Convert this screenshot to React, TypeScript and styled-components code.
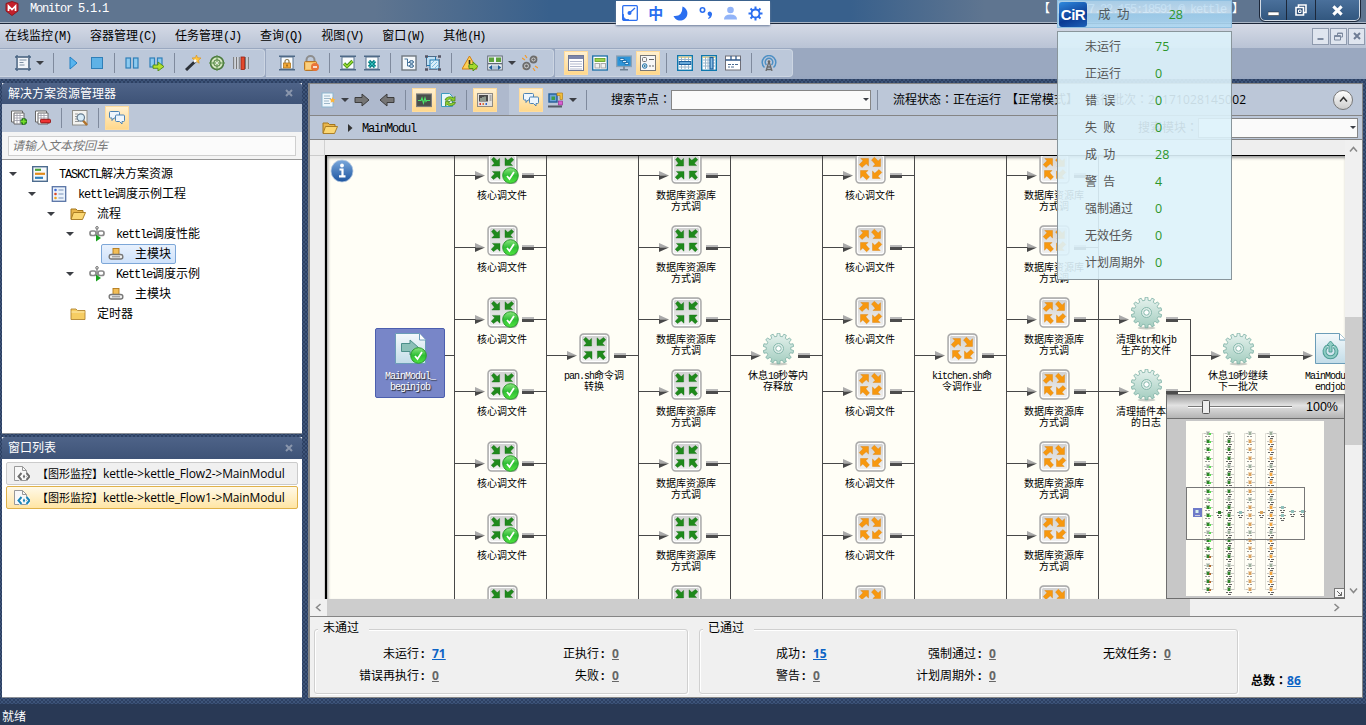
import React from "react";
import styled, { createGlobalStyle, css } from "styled-components";

const SONG = `"Liberation Mono","Noto Sans CJK SC",monospace`;
const YAHEI = `"Open Sans","Noto Sans CJK SC",sans-serif`;

const Global = createGlobalStyle`
  *{box-sizing:border-box}
  html,body{margin:0;padding:0;overflow:hidden}
  body{font:12px/14px ${SONG};color:#000}
  svg{display:block;flex:none}
`;

/* ---------- text ---------- */
const Half = styled.span<{ $tight: number }>`
  letter-spacing:-${p => p.$tight}px;
  white-space:pre;
`;
const T = ({ children, tight = 1.2 }: { children: string; tight?: number }) => (
  <>{children.split(/([\x20-\x7e]+)/).filter(Boolean).map((s, i) =>
    /^[\x20-\x7e]/.test(s) ? <Half key={i} $tight={tight}>{s}</Half> : <React.Fragment key={i}>{s}</React.Fragment>)}</>
);
/* full-width colon centred in its cell */
const Colon = styled.span`font-family:"Noto Sans CJK JP",sans-serif;line-height:1`;

/* ---------- icons ---------- */
const B = "#1a6fa8";
const doc = (stroke = "#7d8794") => <rect x="1" y="1" width="14" height="14" fill="#f4f8fb" stroke={stroke} strokeWidth="1.4" />;
const scroll = (
  <>
    <rect x="2" y="2" width="12" height="12" fill="#fafcfd" stroke="#5b7591" />
    <path d="M0 1.2h16M0 14.8h16" stroke="#4f6a88" strokeWidth="1.6" />
  </>
);
const plusArrow = <path d="M7 9.5h4V7l5 4.5-5 4.5v-2.5H7z" fill="#a7d92c" stroke="#4d8a13" strokeWidth=".9" />;
const gear = (n: number, R: number, r: number, c: number) => {
  const pts: string[] = [];
  for (let i = 0; i < n; i++) {
    const s = (Math.PI * 2) / n;
    [[-0.3, r], [-0.2, R], [0.2, R], [0.3, r]].forEach(([o, rad]) => {
      const a = (i + o) * s;
      pts.push(`${(c + Math.sin(a) * rad).toFixed(2)},${(c - Math.cos(a) * rad).toFixed(2)}`);
    });
  }
  return pts.join(" ");
};

const ICONS: Record<string, React.ReactNode> = {
  frame: <><path d="M0 2h16M0 14h16M2 0v16M14 0v16" stroke="#43607f" strokeWidth="1.3" /><rect x="2.5" y="2.5" width="11" height="11" fill="#f1f5f9" stroke="#6d8097" /><path d="M4.5 5h7M4.5 7.5h4M4.5 10h5" stroke="#7d8fa3" /></>,
  play: <path d="M5 2l7 6-7 6z" fill="#58b4ee" stroke="#2180c4" />,
  stop: <rect x="2.5" y="2.5" width="11" height="11" fill="#5fb2e6" stroke="#2f7fb8" />,
  pause: <g fill="#8ccaf0" stroke="#2f7fb8" strokeWidth="1.2"><rect x="2" y="3" width="4.5" height="10" /><rect x="9.5" y="3" width="4.5" height="10" /></g>,
  pausego: <><g fill="#8ccaf0" stroke="#2f7fb8" strokeWidth="1.2"><rect x="2" y="3" width="4.5" height="9" /><rect x="9.5" y="3" width="4.5" height="9" /></g><path d="M5 10h5V7l6 4.6-6 4.4v-2.700H5z" fill="#b4e02f" stroke="#4d8a13" strokeWidth=".9" /></>,
  wand: <><path d="M11.500 0l1 2.700L16 3l-2.500 2.200.7 3-2.700-1.600-2.500 1.600.6-3L7 3l3.300-.3z" fill="#ffc53d" stroke="#d98e14" strokeWidth=".6" /><path d="M1 15l9.500-9" stroke="#2c3138" strokeWidth="3" /><path d="M9 7l2-2" stroke="#fff" strokeWidth="2.500" /></>,
  target: <><circle cx="8" cy="8" r="6.500" fill="#d5e8c0" stroke="#4a7a3c" strokeWidth="1.600" /><circle cx="8" cy="8" r="3.300" fill="none" stroke="#4a7a3c" /><path d="M8 0v16M0 8h16" stroke="#5f9150" strokeWidth="1" /><circle cx="8" cy="8" r="1" fill="#fff" /></>,
  bars: <><path d="M.8 2v12M3.500 2v12M6 2v12M12.700 2v12M15.200 2v12" stroke="#777" strokeWidth="1.300" /><path d="M2 2v12M5 2v12M14 2v12" stroke="#eee" /><rect x="8" y="2" width="3.500" height="12.500" fill="#e2482b" stroke="#9d1f10" strokeWidth=".8" /></>,
  lockdoc: <>{scroll}<path d="M6 8V6.500a2 2 0 014 0V8" fill="none" stroke="#8b7a52" strokeWidth="1.200" /><rect x="4.500" y="8" width="7" height="5" fill="#f2a93a" stroke="#a96b10" strokeWidth=".7" /><path d="M8 9.500v2" stroke="#5b3a05" /></>,
  lock: <><path d="M3.500 7V5a4 4 0 018 0v2" fill="none" stroke="#8d8d8d" strokeWidth="2" /><rect x="1.500" y="6.500" width="12" height="9" rx="1" fill="#f5bd5c" stroke="#b5762a" /><path d="M3 9h9M3 11h7M3 13h5" stroke="#fbe0a8" /><circle cx="12" cy="12" r="4" fill="#e8743a" /><path d="M10 12h4" stroke="#fff" strokeWidth="1.500" /></>,
  okdoc: <>{scroll}<path d="M4 8.500l3 3L12.500 6" fill="none" stroke="#3f8f18" strokeWidth="3.200" /><path d="M4 8.500l3 3L12.500 6" fill="none" stroke="#9ad832" strokeWidth="1.600" /></>,
  xdoc: <>{scroll}<path d="M5 6l6 6M11 6l-6 6" stroke="#0c7f86" strokeWidth="3.200" /><path d="M5 6l6 6M11 6l-6 6" stroke="#2fc0bb" strokeWidth="1" /></>,
  treedoc: <>{doc("#707880")}<path d="M3.500 4h3v7H9M6.500 7.500H9" fill="none" stroke="#47749b" /><ellipse cx="10.500" cy="7" rx="2" ry="1.400" fill="#bcd8ec" stroke="#37648d" /><ellipse cx="10.500" cy="11" rx="2" ry="1.400" fill="#bcd8ec" stroke="#37648d" /></>,
  crop: <><rect x="1.500" y="1.500" width="9" height="9" fill="#bfe0f4" stroke="#1f76ad" /><rect x="5" y="5" width="9" height="9" fill="#d9eef9" stroke="#1f76ad" /><path d="M6 9l3-3M7 12l5-5M10 13l3-3" stroke="#7dbbe0" /><path d="M0 1.500h3M13 1.500h3M0 14.500h3M13 14.500h3" stroke="#556" strokeWidth="2.600" /><path d="M4 1.500h8M1.500 4v8M14.500 4v8M4 14.500h8" stroke="#667" strokeWidth=".7" /></>,
  warn: <><path d="M7.500 1L15 14H0z" fill="#fbcf57" stroke="#d27d12" /><path d="M7.500 5v4M7.500 10.500v1.500" stroke="#2d2a20" strokeWidth="1.600" />{plusArrow}</>,
  grid: <><rect x=".7" y="1" width="14.600" height="14" fill="#eef2f6" stroke="#616b78" /><rect x="2" y="2.500" width="5" height="4.500" fill="#5da23b" /><rect x="9" y="2.500" width="5" height="4.500" fill="#5da23b" /><rect x="1" y="8" width="14" height="1.300" fill="#616b78" /><path d="M2 12.500l3-2v4zM14 12.500l-3-2v4zM7 10.500v4M9 10.500v4" fill="#1f5d95" stroke="#1f5d95" strokeWidth=".6" /></>,
  bug: <><path d="M0 3l3 2M3 0l2 3M16 13l-3-2M13 16l-2-3M1 14l3-3M15 2l-4 4" stroke="#f39a2c" strokeWidth="1.200" /><circle cx="11.500" cy="4.500" r="3" fill="#ddd" stroke="#6c6c6c" strokeWidth="1.800" /><circle cx="4.500" cy="11" r="3.300" fill="#ccc" stroke="#6c6c6c" strokeWidth="1.800" /><circle cx="11.500" cy="4.500" r="1.200" fill="#666" /><circle cx="4.500" cy="11" r="1.400" fill="#666" /></>,
  list: <><rect x=".5" y=".5" width="15" height="15" fill="#fff" stroke="#6f7896" /><rect x="1" y="1" width="14" height="3" fill="#7c86ab" /><path d="M2 6.500h12M2 9h12M2 11.500h12M2 14h12" stroke="#b3bace" /></>,
  table: <><rect x=".7" y="1" width="14.600" height="14" fill="#fff" stroke={B} strokeWidth="1.300" /><rect x="3" y="3.500" width="10" height="3" fill="#9ed24b" stroke="#5d9b24" strokeWidth=".8" /><rect x="3" y="8.500" width="4.500" height="4.500" fill="#f2f2f2" stroke="#aaa" /><rect x="9" y="8.500" width="4.500" height="4.500" fill="#f2f2f2" stroke="#aaa" /></>,
  monitor: <><rect x=".7" y="1" width="14.600" height="10.500" fill="#2d94d8" stroke="#8aa0b5" strokeWidth="1.300" /><path d="M8 11.500V14M4 14.700h8" stroke="#6f8193" strokeWidth="1.600" /><path d="M4 3.500h4v2H4zM6.500 5.500h4v2h-4zM9 7.500h3.500v2H9z" fill="#dff2fd" stroke="#0a5c9c" strokeWidth=".7" /></>,
  props: <><rect x=".5" y=".5" width="15" height="15" fill="#f7f7f7" stroke="#777" /><rect x="2.500" y="2.500" width="4" height="4" rx="1" fill="none" stroke="#777" /><circle cx="4.700" cy="11" r="2.300" fill="#bfe2f6" stroke="#2a74a8" /><circle cx="4.700" cy="11" r=".8" fill="#145" /><path d="M9 4.500h5M9 11h2M12 11h2" stroke="#666" strokeWidth="1.200" /></>,
  rowtab: <><rect x=".7" y=".7" width="14.600" height="14.600" fill="#fff" stroke="#0f78ae" strokeWidth="1.400" /><path d="M1.500 2.200h13" stroke="#e8c34e" /><path d="M4.500 2v12M8 2v12M11.500 2v12M2 4.500h12M2 12h12" stroke="#9ab6cc" /><rect x="2.200" y="6.500" width="11.600" height="3" fill="#69a9d9" stroke="#195f9e" /></>,
  coltab: <><rect x=".7" y=".7" width="14.600" height="14.600" fill="#fff" stroke="#0f78ae" strokeWidth="1.400" /><path d="M1.500 2.200h13" stroke="#e8c34e" /><path d="M4.500 2v12M7 2v12M2 5h12M2 8h12M2 11h12" stroke="#9ab6cc" /><rect x="9" y="2.500" width="3" height="11.500" fill="#8abde3" stroke="#195f9e" strokeWidth="1.200" /></>,
  tabs: <><rect x=".5" y="1" width="15" height="14" fill="#fff" stroke="#6f6f77" /><path d="M.5 5h15M6 1v4M11 1v4" stroke="#31598a" strokeWidth="1.300" /><path d="M3 9.500h3M7 9.500h2M10 9.500h3M3 12h2M6 12h3" stroke="#4b6b91" /></>,
  antenna: <><path d="M3.500 12.500a6.800 6.800 0 119 0M5.500 10a3.800 3.800 0 115 0" fill="none" stroke="#4c8fc4" strokeWidth="1.500" /><path d="M8 6.500L5 16M8 6.500L11 16M6 12h4M5.500 14.500h5" stroke="#6a6a6a" strokeWidth="1.300" /><circle cx="8" cy="6.500" r="1.300" fill="#666" /></>,
  docstar: <><rect x="2" y="1" width="11" height="14" fill="#eef6fb" stroke="#8cb6d0" /><path d="M4 4h6M4 6.500h7M4 9h5M4 11.500h6" stroke="#9cb6c8" /><path d="M12.500 5l.9 2 2.200.2-1.600 1.500.4 2.100-1.900-1.100-1.900 1.100.4-2.100L9.400 7.200l2.200-.2z" fill="#fbb53e" /></>,
  right: <path d="M1 5.500h7V2l7 6-7 6v-3.500H1z" fill="#757575" stroke="#3d3d3d" />,
  left: <path d="M15 5.500H8V2L1 8l7 6v-3.500h7z" fill="#757575" stroke="#3d3d3d" />,
  pulse: <><rect x=".5" y="2" width="15" height="12.500" fill="#4b4f4c" stroke="#7c7c7c" strokeWidth="1.200" /><path d="M2 8.500h3l1-2.500 1.500 5L9 6l1 3.500.8-1H14" fill="none" stroke="#49e467" strokeWidth="1.100" /></>,
  refresh: <><path d="M1.500 1.500h8l3 3v10h-11z" fill="#e7f6fb" stroke="#3c9cc0" /><path d="M5 8a5 4 0 018.500-2l1.500-1.500V9h-4.500L12 7.500A3.500 3 0 007.500 8.500zM15.500 10.500a5 4 0 01-8.500 2L5.500 14v-4.500H10L8.500 11a3.500 3 0 004.500-.5z" fill="#8fd02c" stroke="#3f7d12" strokeWidth=".7" /></>,
  meter: <><rect x=".5" y="1.500" width="15" height="13" fill="#e4e2de" stroke="#8f8b84" /><rect x="2" y="3" width="9" height="6.500" fill="#4a4a4a" /><path d="M4 9V6M6 9V5M8 9V4.500" stroke="#cfe6cf" /><path d="M12.500 4h2M12.500 6h2M12.500 8h2" stroke="#777" /><path d="M2.500 12h1.500" stroke="#d33" strokeWidth="2" /><path d="M5.500 12h1.500" stroke="#d73" strokeWidth="2" /><path d="M8.500 12H10" stroke="#36c" strokeWidth="2" /></>,
  chat: <g stroke="#4d83b5" strokeWidth="1" fill="#eef6fd"><path d="M1.500 1.500h8q1 0 1 1v4.500q0 1-1 1H5L3 10.500V8H1.500q-1 0-1-1V2.500q0-1 1-1z" /><path d="M7.500 5h7q1 0 1 1v4.500q0 1-1 1H13V14l-2.500-2.500h-3q-1 0-1-1V6q0-1 1-1z" /></g>,
  blocks: <><rect x="1" y="2" width="8" height="8" fill="#6aa3d8" stroke="#245c97" strokeWidth="1.400" /><rect x="3.500" y="4.500" width="3.500" height="3.500" fill="#3f9b47" /><path d="M9 1h5.500v6.500H12v-4H9z" fill="#f0bd3c" stroke="#b5811a" strokeWidth=".7" /><rect x="10.500" y="9" width="4" height="4" fill="#d860d0" stroke="#97308f" strokeWidth=".7" /><path d="M0 14.500h14" stroke="#555b66" strokeWidth="2" /></>,
  expand: <><path d="M.5 1h11v11H.5z" fill="#fff" stroke="#666" /><path d="M3 3h10v11H3z" fill="#fff" stroke="#666" /><path d="M3 5.500h10M3 8h10M3 10.500h10M6 3v11M9 3v11" stroke="#9a9aa6" strokeWidth=".8" /><path d="M9.500 11.500h6.500M12.700 8.300v6.500" stroke="#125c12" strokeWidth="3.800" /><path d="M10 11.500h5.500M12.700 8.800v5.500" stroke="#73dd2a" strokeWidth="1.800" /></>,
  collapse: <><path d="M.5 1h11v11H.5z" fill="#fff" stroke="#666" /><path d="M3 3h10v11H3z" fill="#fff" stroke="#666" /><path d="M3 5.500h10M3 8h10M6 3v8M9 3v8" stroke="#9a9aa6" strokeWidth=".8" /><rect x="5.500" y="9.300" width="10" height="3.600" rx="1" fill="#e33" stroke="#8c1010" strokeWidth=".9" /></>,
  find: <><rect x=".5" y=".5" width="14.500" height="14.500" fill="#f3f3f0" stroke="#8d8d88" /><path d="M3 4h3M3 6.500h2M3 9h2M3 11.500h4" stroke="#999" /><path d="M11 10.500l4 4.500" stroke="#b0722b" strokeWidth="2.500" /><circle cx="8.800" cy="7.500" r="3.700" fill="#d8ecf8" stroke="#667c8e" strokeWidth="1.200" /></>,
  folderOpen: <><path d="M1 13V3h5l1.500 1.500H13V7" fill="#e9b64c" stroke="#a4761c" /><path d="M3.500 6.500h12L12.500 13.500H1z" fill="#fbd773" stroke="#a4761c" strokeWidth=".9" /></>,
  folder: <><path d="M1 13.500V3h5l1.500 1.500H15v9z" fill="#f6cd63" stroke="#b28632" strokeWidth=".9" /><path d="M1.500 6h13" stroke="#fdeab0" /></>,
  solution: <><rect x=".7" y=".7" width="14.600" height="14.600" fill="#f5f9fc" stroke="#4d6c8f" strokeWidth="1.400" /><path d="M3 3.800h6" stroke="#4ba23b" strokeWidth="2.200" /><path d="M3 7.800h10" stroke="#e28b1c" strokeWidth="2.200" /><path d="M3 11.800h8" stroke="#2f7fbd" strokeWidth="2.200" /></>,
  project: <><rect x="1.300" y=".7" width="13.400" height="14.600" fill="#eaf2fb" stroke="#5873a5" strokeWidth="1.300" /><circle cx="4.500" cy="4" r="1.300" fill="#446bd4" /><circle cx="4.500" cy="8" r="1.300" fill="#dd4a2a" /><circle cx="4.500" cy="12" r="1.300" fill="#efa51e" /><path d="M7.500 4h5M7.500 8h5M7.500 12h5" stroke="#7b92b8" /></>,
  flow: <><path d="M8 1v12" stroke="#888" strokeWidth="1.300" /><circle cx="8" cy="1.800" r="1.300" fill="#ddd" stroke="#777" /><rect x="1" y="5" width="6" height="4.500" rx="2" fill="none" stroke="#8a8a8a" strokeWidth="1.700" /><rect x="9" y="5" width="6" height="4.500" rx="2" fill="none" stroke="#8a8a8a" strokeWidth="1.700" /><path d="M7 8.500l5 3.500-5 3.500z" fill="#19a11d" /></>,
  module: <><rect x="5" y="2.500" width="6" height="6" fill="#f2be57" stroke="#b37a1c" strokeWidth=".9" /><rect x="1.200" y="8.500" width="13.600" height="4.500" rx="2" fill="#eee" stroke="#777" strokeWidth="1.400" /><path d="M4 10.800h8" stroke="#888" /></>,
};
const codeDoc = (c: string) => (
  <><path d="M.5.500h8l4 4v10H.5z" fill="#f8f8f8" stroke="#999" /><path d="M8.500.5v4h4" fill="none" stroke="#999" /><path d="M7.500 7l-3 3.500 3 3.500M12.500 7l3 3.500-3 3.500" fill="none" stroke="#fff" strokeWidth="4" /><path d="M7.500 7l-3 3.500 3 3.500M12.500 7l3 3.500-3 3.500" fill="none" stroke={c} strokeWidth="2" /><path d="M10 8.300l1.200 2.200L10 12.700l-1.200-2.200z" fill={c} /></>
);
ICONS.codeGray = codeDoc("#6e6e6e");
ICONS.codeBlue = codeDoc("#1d86b8");

const Icon = ({ n, s = 16 }: { n: string; s?: number }) => (
  <svg width={s} height={s} viewBox="0 0 16 16" fill="none">{ICONS[n]}</svg>
);

/* ---------- frame ---------- */
const weave = css`
  background-color:#2d4062;
  background-image:radial-gradient(#3d5479 28%,transparent 32%),radial-gradient(#3d5479 28%,transparent 32%);
  background-size:4px 4px;background-position:0 0,2px 2px;
`;
const Window = styled.div`width:1366px;height:725px;display:flex;flex-direction:column;position:relative;overflow:hidden;${weave}`;
const TitleBar = styled.header`
  height:24px;flex:none;display:flex;align-items:flex-start;padding:0 6px 0 5px;color:#fff;
  background:linear-gradient(90deg,#5f7590 0,#5f7590 375px,#38608c 550px,#38608c 850px,#5f7590 985px);
  border-bottom:1px solid #1c2739;box-shadow:inset 0 -1px #a9b5c5;
`;
const AppIcon = styled.svg`margin-top:1px`;
const AppName = styled.span`margin:2px 0 0 11px;flex:1;line-height:14px`;
const Server = styled.span`display:flex;margin:4px 16px 0 0;line-height:13px;font-size:12px`;
const ServerName = styled.span`width:182px;padding-left:32px`;
const WinButtons = styled.div`
  display:flex;height:21px;border:1px solid #d4dce6;border-top:0;border-radius:0 0 5px 5px;background:linear-gradient(#4a709b,#32577f);
  outline:1px solid #1c2739;overflow:hidden;
`;
const WinButton = styled.span<{ $w: number }>`
  width:${p => p.$w}px;display:grid;place-items:center;
  &+&{border-left:1px solid #1c2739}
`;
const MenuBar = styled.nav`height:24px;flex:none;display:flex;gap:19px;align-items:center;padding-left:5px;background:linear-gradient(#d5dae6,#b9c3d5)`;
const MenuItem = styled.span`padding-top:2px`;
const Mdi = styled.div`margin-left:auto;display:flex;gap:1px;padding-right:1px`;
const MdiButton = styled.span`width:17px;height:17px;border:1px solid #8e9aae;background:#dfe5ef;display:grid;place-items:center`;
const ToolStrip = styled.div`height:31px;flex:none;display:flex;background:linear-gradient(#9aa8c0 27px,#96a5bf);padding-top:1px`;
const ToolGroup = styled.div<{ $w: number; $pad: number }>`
  width:${p => p.$w}px;padding-left:${p => p.$pad}px;height:28px;display:flex;align-items:center;
  background:#bcc8da;border:1px solid #ccd5e2;border-left:0;border-radius:0 4px 4px 0;margin-right:1px;
`;
const ToolButton = styled.span<{ $on?: boolean; $w?: number }>`
  width:${p => p.$w ?? 24}px;height:24px;flex:none;display:grid;place-items:center;
  ${p => p.$on && css`background:linear-gradient(#fff0d0,#ffd88c);border:1px solid #ffdc9c;`}
`;
const Sep = styled.i<{ $w?: number }>`
  width:${p => p.$w ?? 12}px;height:20px;flex:none;display:flex;justify-content:center;
  &::before{content:"";width:1px;height:20px;background:#7f8a9d}
`;
const Caret = styled.i<{ $w?: number; $small?: boolean; $hidden?: boolean }>`
  width:${p => p.$w ?? 10}px;flex:none;display:flex;justify-content:center;
  ${p => p.$hidden && "visibility:hidden;"}
  &::before{content:"";border:${p => p.$small ? "3px" : "4px"} solid transparent;border-top-color:#3c3f45;border-bottom:0}
`;

const Workspace = styled.div`flex:1;display:flex;padding:4px 3px 0 2px;min-height:0`;
const Side = styled.aside`width:300px;margin-right:6px;display:flex;flex-direction:column;gap:3px;height:615px`;
const Panel = styled.section<{ $h: number }>`height:${p => p.$h}px;display:flex;flex-direction:column;background:#fff;border-bottom:1px solid #8b8f96`;
const PanelHead = styled.h2<{ $h: number }>`
  height:${p => p.$h}px;flex:none;margin:0;padding:0 9px 1px 6px;display:flex;align-items:center;justify-content:space-between;
  font:12px/17px ${YAHEI};color:#fff;background:linear-gradient(#4e6388,#3e5377);border-radius:3px 3px 0 0;
`;
const PanelTools = styled.div`height:28px;flex:none;display:flex;align-items:center;padding-left:5px;background:#bcc7d8`;
const SearchRow = styled.div`height:28px;flex:none;padding:4px 6px;background:#f4f4f4;border-bottom:1px solid #999`;
const SearchBox = styled.div`height:20px;width:288px;border:1px solid #cfcfcf;background:#fbfbfb;padding:1px 3px;font:italic 12px/16px ${YAHEI};color:#777`;
const Tree = styled.ul`list-style:none;margin:0;padding:4px 0 0`;
const TreeRow = styled.li<{ $level: number }>`
  height:20px;display:flex;align-items:center;padding-left:${p => 6 + p.$level * 19}px;
`;
const TreeItem = styled.span<{ $on?: boolean }>`
  height:20px;display:flex;align-items:center;gap:11px;padding:0 4px 0 6px;margin-left:7px;border:1px solid transparent;white-space:nowrap;
  ${p => p.$on && css`border-color:#7da7d8;border-radius:2px;background:linear-gradient(#e8f1fd,#cfe2fb);`}
`;
const TreeText = styled.span`padding-top:2px`;
const WinItem = styled.div<{ $on?: boolean }>`
  height:23px;margin:3px 4px -2px 4px;display:flex;align-items:center;padding-left:7px;border-radius:2px;
  font:12px/16px ${YAHEI};white-space:nowrap;
  border:1px solid ${p => p.$on ? "#e0b24a" : "#cbcbcb"};
  background:${p => p.$on ? "linear-gradient(#fff9e8,#ffe5a4)" : "#f0f0f0"};
  &+&{margin-top:3px}
`;
const Kind1 = styled.span`font-size:11px;margin-left:7px`;
const Path = styled.span`letter-spacing:-.13px`;

const Main = styled.main`
  width:1055px;height:615px;display:flex;flex-direction:column;border:2px solid #858585;border-width:1px 1px 1px 2px;background:#efefef;
`;
const FlowTools = styled.div`
  height:32px;flex:none;display:flex;align-items:center;padding-left:6px;font:12px/16px ${YAHEI};white-space:nowrap;
  background:linear-gradient(90deg,#aeb9cd 199px,#bcc7d8 199px);border-bottom:1px solid #858585;
`;
const Label = styled.span<{ $w: number }>`width:${p => p.$w}px;flex:none;white-space:pre`;
const Batch = styled.span`letter-spacing:.15px`;
const Combo = styled.span<{ $w: number }>`
  width:${p => p.$w}px;height:20px;flex:none;border:1px solid #858585;background:#fafafa;display:flex;align-items:center;justify-content:flex-end;padding-right:1px;
`;
const Round = styled.span`width:20px;height:20px;border-radius:50%;border:1px solid #777;background:linear-gradient(#fff,#ccc);display:grid;place-items:center;margin-left:auto;margin-right:9px`;
const Crumbs = styled.div`height:24px;flex:none;display:flex;align-items:center;padding:0 4px 0 12px;gap:7px;background:#bcc7d8;border-bottom:1px solid #858585`;
const CrumbSearch = styled.span`margin-left:auto;display:flex;align-items:center;font:12px/16px ${YAHEI}`;
const ViewRow = styled.div`height:459px;flex:none;display:flex`;
const RulerLeft = styled.div`width:15px;border-right:1px solid #d0d0d0;background:linear-gradient(#eee 15px,#ccc 15px,#ccc 16px,#eee 16px)`;
const ViewCol = styled.div`flex:1;display:flex;flex-direction:column;min-width:0`;
const RulerTop = styled.div`height:15px;background:#eee`;
const Canvas = styled.div`
  flex:1;position:relative;overflow:hidden;background:#fffef6;border-top:1px solid #000;border-left:2px solid #000;
  box-shadow:inset 1px 2px 3px #999;
`;
const VScroll = styled.div`flex:none;width:17px;display:flex;flex-direction:column;align-items:center;padding-top:5px;background:#f0f0f0`;
const HScroll = styled.div`flex:none;height:17px;display:flex;align-items:center;padding-left:4px;background:#f0f0f0`;
const VThumb = styled.span`width:17px;height:128px;margin:163px 0 141px;background:#cdcdcd`;
const HThumb = styled.span`width:863px;height:17px;margin:0 142px 0 4px;background:#cdcdcd`;

/* diagram nodes sit on a free canvas, in window coordinates shifted by its origin */
const OX = 327, OY = 156;
const Wires = styled.svg`position:absolute;left:0;top:0`;
const NodeBox = styled.div<{ $x: number; $y: number; $on?: boolean }>`
  position:absolute;left:${p => p.$x - 35 - OX}px;top:${p => p.$y - 5 - OY}px;width:70px;height:70px;padding-top:5px;
  display:flex;flex-direction:column;align-items:center;gap:7px;
  ${p => p.$on && css`background:#7886c8;border:1px solid #4c5fae;border-radius:2px;color:#fff;text-shadow:1px 1px 1px #222;padding-top:4px;`}
`;
const NodeIcon = styled.span`position:relative;width:31px;height:31px`;
const NodeLabel = styled.span`font:10px/11px ${SONG};text-align:center;white-space:pre`;
const Badge = styled.svg`position:absolute;left:15px;top:14px`;
const Info = styled.svg`position:absolute;left:3px;top:3px`;

type Kind = "in" | "out" | "gear" | "begin" | "end";
const IN = "M4.500 6.500L6.800 4.200L10.200 7.600L12.600 5.400V13H4.800L7.300 10.200Z";
const OUT = "M4.200 11.600L8 7.800L5.800 5.500H13.500V13L11.200 10.800L7 14.500Z";
const Art = ({ k }: { k: Kind }) => {
  if (k === "gear") return (
    <svg width="31" height="33" viewBox="0 0 31 33">
      <ellipse cx="15.500" cy="31" rx="9" ry="1.500" fill="#c9cdc6" />
      <polygon points={gear(14, 15.3, 12.3, 15.5)} fill="url(#gearFill)" stroke="#7cb0a4" strokeWidth=".8" />
      <circle cx="15.500" cy="15.500" r="5" fill="#dfeee9" stroke="#86b8ac" /><circle cx="15.500" cy="15.500" r="2.700" fill="#fff" stroke="#86b8ac" />
    </svg>
  );
  if (k === "begin" || k === "end") return (
    <svg width="31" height="31" viewBox="0 0 31 31">
      <path d="M.5.500H24.500L30.500 7V30.500H.5z" fill="url(#docFill)" stroke="#6b9db8" /><path d="M24.500.500V7H30.500" fill="#fff" stroke="#6b9db8" />
      {k === "begin"
        ? <path d="M6.500 10.500H15V7L23.500 14.500L15 22V18.500H6.500z" fill="#8cc0b8" stroke="#4d8f8a" />
        : <><path d="M12 13.500a6 6 0 107 0" fill="none" stroke="#4f9d95" strokeWidth="4" /><path d="M12 13.500a6 6 0 107 0" fill="none" stroke="#8fcdc4" strokeWidth="2" /><path d="M14 19V12.500H11.500L15.500 8L19.500 12.500H17V19z" fill="#8fcdc4" stroke="#4f9d95" /></>}
    </svg>
  );
  return (
    <svg width="31" height="31" viewBox="0 0 31 31">
      <rect x="1" y="1" width="29" height="29" rx="3.500" fill="url(#tileFill)" stroke="#a9a9a9" strokeWidth="1.400" />
      <rect x="2.500" y="2.500" width="26" height="26" rx="2" fill="none" stroke="#fff" />
      {[0, 90, 180, 270].map(a => <path key={a} d={k === "in" ? IN : OUT} transform={`rotate(${a} 15.500 15.500)`} fill={k === "in" ? "#1f8a1c" : "#f7980f"} stroke={k === "in" ? "#176c15" : "#d87f0a"} strokeWidth=".4" />)}
    </svg>
  );
};
const Node = ({ x, y, k, label, done, on }: { x: number; y: number; k: Kind; label: string[]; done?: boolean; on?: boolean }) => (
  <NodeBox $x={x} $y={y} $on={on}>
    <NodeIcon>
      <Art k={k} />
      {done && <Badge width="17" height="17" viewBox="0 0 17 17"><circle cx="8.500" cy="8.500" r="7.800" fill="url(#okFill)" stroke="#2a9a2d" /><path d="M5 9l2.500 3L12 5" fill="none" stroke="#fff" strokeWidth="1.800" /></Badge>}
    </NodeIcon>
    <NodeLabel>{label.map((l, i) => <React.Fragment key={i}>{i > 0 && <br />}<T tight={1}>{l}</T></React.Fragment>)}</NodeLabel>
  </NodeBox>
);

const ROWS = [153, 225, 297, 369, 441, 513, 585];
const COLS: { x: number; k: Kind; label: string[]; done?: boolean }[] = [
  { x: 454, k: "in", label: ["核心调文件"], done: true },
  { x: 638, k: "in", label: ["数据库资源库", "方式调"] },
  { x: 822, k: "out", label: ["核心调文件"] },
  { x: 1006, k: "out", label: ["数据库资源库", "方式调"] },
];
const SINGLES: { x: number; y: number; k: Kind; label: string[] }[] = [
  { x: 546, y: 333, k: "in", label: ["pan.sh命令调", "转换"] },
  { x: 730, y: 333, k: "gear", label: ["休息10秒等内", "存释放"] },
  { x: 914, y: 333, k: "out", label: ["kitchen.sh命", "令调作业"] },
  { x: 1098, y: 297, k: "gear", label: ["清理ktr和kjb", "生产的文件"] },
  { x: 1098, y: 369, k: "gear", label: ["清理插件本身", "的日志"] },
  { x: 1190, y: 333, k: "gear", label: ["休息10秒继续", "下一批次"] },
];
const Wire = ({ x, y, end }: { x: number; y: number; end?: boolean }) => (
  <g>
    <path d={`M${x} ${y + 22.5}H${x + 22}${end ? "" : `M${x + 78} ${y + 22.5}H${x + 92}`}`} stroke="#484848" />
    <path d={`M${x + 21} ${y + 18}L${x + 31} ${y + 22.500}H${x + 21}z`} fill="#aaa" />
    <path d={`M${x + 21} ${y + 27}L${x + 31} ${y + 22.500}H${x + 21}z`} fill="#484848" />
    {!end && <><rect x={x + 68} y={y + 20} width="12" height="2" fill="#bbb" /><rect x={x + 68} y={y + 22} width="12" height="3" fill="#4c4c4c" /></>}
  </g>
);

/* overview panel pinned over the canvas corner */
const Overview = styled.div`position:absolute;right:0;bottom:0;width:179px;height:205px;border:1px solid #6e6e6e;background:#c7c7c7;display:flex;flex-direction:column;z-index:2`;
const ZoomBar = styled.div`height:24px;flex:none;display:flex;align-items:center;padding:0 6px 0 20px;justify-content:space-between;background:linear-gradient(#9a9a9a,#e2e2e2 45%,#b4b4b4);border-bottom:1px solid #6e6e6e;font:12.500px/14px "Liberation Sans",sans-serif`;

const Mini = () => {
  const cols = [1208, 1229, 1250, 1271];
  return (
    <svg width="177" height="179" viewBox="1167 419 177 179">
      <rect x="1186" y="421" width="138" height="175" fill="#fffef6" />
      {cols.map((c, ci) => (
        <g key={c}>
          <rect x={c - 5.5} y="433.500" width="11" height="156" fill="none" stroke="#e3e2da" />
          {Array.from({ length: 20 }, (_, r) => {
            const y = Math.round(433 + r * 8.23);
            const pale = r % 4 === 0;
            return (
              <g key={r}>
                <rect x={c - 4} y={y} width="9" height="1" fill="#c4c4c0" />
                <rect x={c - 2} y={y - 2} width="4" height="4" fill={pale ? "#d3d8d0" : ci < 2 ? "#a3bb9d" : "#ecd3b4"} />
                <rect x={c - 1} y={y - 1} width="2" height="3" fill={pale ? "#9db09b" : ci < 2 ? "#2f8529" : ci === 2 ? "#dba25c" : "#f5a63a"} />
                {ci === 0 && <rect x={c + 1} y={y} width="2" height="2" fill={r > 14 ? "#b3692c" : "#58df50"} />}
                <path d={ci % 2 ? `M${c - 3} ${y + 3.500}h2m1 0h3m-4 2h3` : `M${c - 3} ${y + 3.500}h2m1 0h2`} stroke={ci % 2 ? "#666" : "#999"} />
              </g>
            );
          })}
        </g>
      ))}
      {[[1219, 513], [1240, 513], [1261, 513], [1282, 508], [1282, 516], [1292, 512], [1302, 512]].map(([x, y], i) => (
        <g key={i}><rect x={x - 3} y={y - 1} width="7" height="1" fill="#999" /><rect x={x - 1} y={y - 2} width="3" height="3" fill={i === 0 ? "#2c7a27" : i === 2 ? "#d9a45c" : "#8fc0bb"} /><path d={`M${x - 2} ${y + 2.500}h2m1 0h2m-4 2h3`} stroke="#666" /></g>
      ))}
      <rect x="1193" y="508" width="9" height="9" fill="#6f7bc9" /><rect x="1195.500" y="510" width="3" height="3" fill="#d8f0ee" /><path d="M1195 515.500h5" stroke="#ccd" />
      <rect x="1186.500" y="487.500" width="118" height="52" fill="none" stroke="#777" />
      <rect x="1334.500" y="588.500" width="10" height="9" fill="#f6f6f6" stroke="#777" /><path d="M1337 591l4.500 4.500M1341.500 592v3.500h-3.500" stroke="#666" fill="none" />
    </svg>
  );
};

/* statistics */
const Stats = styled.div`flex:1;position:relative;display:flex;padding:4px 0 0 4px;background:#f0f0f0;border-top:1px solid #858585;font:12px/16px ${YAHEI}`;
const Group = styled.section<{ $w: number }>`
  width:${p => p.$w}px;height:65px;margin:8px 11px 0 0;padding-top:13px;border:1px solid #d0d0d0;border-radius:3px;box-shadow:inset 1px 1px #fff,1px 1px #fff;
  position:relative;
`;
const Legend = styled.span`position:absolute;left:3px;top:-10px;background:#f0f0f0;padding:0 10px 0 5px`;
const Cols = styled.div<{ $cols: string }>`display:grid;grid-template-columns:${p => p.$cols};grid-auto-rows:22px;align-items:center;white-space:nowrap`;
const Stat = styled.span`display:flex;justify-content:flex-end`;
const Dots = styled.b`width:13px;padding-left:2px`;
const Num = styled.b<{ $c?: string }>`width:20px;color:${p => p.$c ?? "#666"};text-decoration:underline;font:bold 12px/16px "Open Sans",sans-serif`;
const Total = styled.b`display:flex;align-self:flex-end;padding-bottom:8px;margin-left:2px`;
const Status = styled.footer`height:21px;flex:none;background:#293955;color:#fff;padding:7px 0 0 2px`;
const Stat1 = ({ l, v, c }: { l: string; v: string; c?: string }) => <Stat><span>{l}</span><Dots>:</Dots><Num $c={c}>{v}</Num></Stat>;

/* floating tools over the window */
const Ime = styled.div`
  position:absolute;left:616px;top:1px;width:154px;height:24px;background:#fff;box-shadow:0 1px 2px #6b7c9a;display:flex;align-items:center;justify-content:space-between;padding:0 7px 0 6px;color:#2b6ff0;
  font:bold 15px/18px "Noto Sans CJK SC",sans-serif;
`;
const FloatHead = styled.div`
  position:absolute;left:1057px;top:0;width:175px;height:28px;display:flex;align-items:center;padding-left:1px;border:1px solid #8fbfe0;
  background:linear-gradient(rgba(176,214,240,.9),rgba(206,229,245,.88) 45%,rgba(160,207,238,.92) 50%,rgba(174,215,240,.92));
  font:12.500px/20px ${YAHEI};color:#505a60;
`;
const Logo = styled.span`
  width:28px;height:25px;border-radius:3px;background:linear-gradient(160deg,#2f8ade,#0b3b94 60%,#1d61b8);color:#fff;
  font:bold 15px/25px "Liberation Sans",sans-serif;text-align:center;letter-spacing:-.5px;margin-right:11px;
`;
const HeadText = styled.span`white-space:pre;padding-top:1px`;
const HeadNum = styled.span`color:#2d962b;margin-left:auto;padding:1px 48px 0 0`;
const Float = styled.dl`
  position:absolute;left:1057px;top:31px;width:175px;height:249px;margin:0;padding:1px 0 0 27px;border:1px solid #89959b;
  background:rgba(221,242,251,.9);font:12px/27px ${YAHEI};color:#555;display:grid;grid-template-columns:70px 1fr;grid-auto-rows:27px;
  dt,dd{margin:0;white-space:pre}
`;
const Green = styled.dd`color:#2d962b;font-size:12.500px`;

const X = ({ c = "#8a96ac", s = 8, w = 2 }) => <svg width={s} height={s} viewBox="0 0 8 8"><path d="M1 1l6 6M7 1L1 7" stroke={c} strokeWidth={w} /></svg>;
const Chev = ({ r, c = "#888" }: { r: number; c?: string }) => <svg width="9" height="9" viewBox="0 0 9 9"><path d="M1 6.500l3.500-4 3.500 4" transform={`rotate(${r} 4.500 4.500)`} fill="none" stroke={c} strokeWidth="1.500" /></svg>;
const Btns = ({ names, on = [] }: { names: string[]; on?: string[] }) => <>{names.map(n => <ToolButton key={n} $on={on.includes(n)}><Icon n={n} /></ToolButton>)}</>;

const MENUS = ["在线监控(M)", "容器管理(C)", "任务管理(J)", "查询(Q)", "视图(V)", "窗口(W)", "其他(H)"];
const TREE: [number, string, string, boolean, boolean?][] = [
  [0, "solution", "TASKCTL解决方案资源", true], [1, "project", "kettle调度示例工程", true], [2, "folderOpen", "流程", true],
  [3, "flow", "kettle调度性能", true], [4, "module", "主模块", false, true], [3, "flow", "Kettle调度示例", true],
  [4, "module", "主模块", false], [2, "folder", "定时器", false],
];
const COUNTS: [string, string][] = [["未运行", "75"], ["正运行", "0"], ["错  误", "0"], ["失  败", "0"], ["成  功", "28"], ["警  告", "4"], ["强制通过", "0"], ["无效任务", "0"], ["计划周期外", "0"]];

export default function App() {
  return (
    <Window>
      <Global />
      <TitleBar>
        <AppIcon width="14" height="15" viewBox="0 0 14 15"><path d="M1 2.500L7 0.500L13 2.500V10L7 14.500L1 10z" fill="#c5202b" stroke="#8b1a22" /><path d="M3.500 10V5L7 8.500L10.500 5V10" fill="none" stroke="#fff" strokeWidth="1.700" /></AppIcon>
        <AppName><T>Monitor 5.1.1</T></AppName>
        <Server>【<ServerName><T>77.22.155:18591 @ kettle</T></ServerName>】</Server>
        <WinButtons>
          <WinButton $w={25}><svg width="11" height="12"><rect y="8" width="11" height="3.500" fill="#fff" stroke="#222" strokeWidth=".5" /></svg></WinButton>
          <WinButton $w={29}><svg width="12" height="12" viewBox="0 0 12 12" fill="#2d4f78" stroke="#fff" strokeWidth="1.600"><path d="M3.500 1h7.500v7.500H3.500z" /><path d="M1 3.500h7.500V11H1z" /><path d="M3.500 6h2.500v2.500H3.500z" strokeWidth="1" /></svg></WinButton>
          <WinButton $w={44}><X c="#fff" s={11} w={2.2} /></WinButton>
        </WinButtons>
      </TitleBar>
      <MenuBar>
        {MENUS.map(m => <MenuItem key={m}><T>{m}</T></MenuItem>)}
        <Mdi>
          <MdiButton><svg width="9" height="9"><path d="M1.500 7h6" stroke="#7d8aa0" strokeWidth="2" /></svg></MdiButton>
          <MdiButton><svg width="9" height="9" fill="none" stroke="#7d8aa0"><path d="M3.500 3V1H8.500V5H6.500M.5 3.500H6.500V8H.5zM.5 4.500h6M3 1.500h5.500" /></svg></MdiButton>
          <MdiButton><X c="#6f7d95" /></MdiButton>
        </Mdi>
      </MenuBar>
      <ToolStrip>
        <ToolGroup $w={265} $pad={11}>
          <Btns names={["frame"]} /><Caret /><Sep $w={16} />
          <Btns names={["play"]} /><ToolButton $w={23}><Icon n="stop" /></ToolButton><Sep $w={12} /><Btns names={["pause", "pausego"]} /><Sep $w={13} /><Btns names={["wand", "target", "bars"]} />
        </ToolGroup>
        <ToolGroup $w={288} $pad={9}>
          <Btns names={["lockdoc", "lock"]} /><Sep $w={13} /><Btns names={["okdoc", "xdoc"]} /><Sep $w={13} /><Btns names={["treedoc", "crop"]} /><Sep $w={13} />
          <Btns names={["warn"]} /><ToolButton $w={26}><Icon n="grid" /></ToolButton><Caret $w={8} /><ToolButton $w={28}><Icon n="bug" /></ToolButton>
        </ToolGroup>
        <ToolGroup $w={238} $pad={9}>
          <Btns names={["list", "table", "monitor", "props"]} on={["list", "props"]} /><Sep $w={13} /><Btns names={["rowtab", "coltab", "tabs"]} /><Sep /><Btns names={["antenna"]} />
        </ToolGroup>
      </ToolStrip>

      <Workspace>
        <Side>
          <Panel $h={351}>
            <PanelHead $h={21}>解决方案资源管理器<X /></PanelHead>
            <PanelTools><Btns names={["expand", "collapse"]} /><Sep $w={13} /><Btns names={["find"]} /><Sep $w={13} /><Btns names={["chat"]} on={["chat"]} /></PanelTools>
            <SearchRow><SearchBox>请输入文本按回车</SearchBox></SearchRow>
            <Tree>
              {TREE.map(([lv, ic, tx, open, on], i) => (
                <TreeRow key={i} $level={lv}><Caret $hidden={!open} /><TreeItem $on={on}><Icon n={ic} /><TreeText><T>{tx}</T></TreeText></TreeItem></TreeRow>
              ))}
            </Tree>
          </Panel>
          <Panel $h={261}>
            <PanelHead $h={22}>窗口列表<X /></PanelHead>
            <WinItem><Icon n="codeGray" /><Kind1>【图形监控】</Kind1><Path>kettle-&gt;kettle_Flow2-&gt;MainModul</Path></WinItem>
            <WinItem $on><Icon n="codeBlue" /><Kind1>【图形监控】</Kind1><Path>kettle-&gt;kettle_Flow1-&gt;MainModul</Path></WinItem>
          </Panel>
        </Side>

        <Main>
          <FlowTools>
            <Btns names={["docstar"]} /><Caret $w={9} /><ToolButton $w={26}><Icon n="right" /></ToolButton><Btns names={["left"]} /><Sep $w={13} /><Btns names={["pulse", "refresh"]} on={["pulse"]} /><Sep $w={13} /><Btns names={["meter"]} on={["meter"]} />
            <Label $w={22} /><Btns names={["chat"]} on={["chat"]} /><ToolButton $w={26}><Icon n="blocks" /></ToolButton><Caret $w={8} /><Sep $w={18} />
            <Label $w={16} /><Label $w={60}>搜索节点<Colon>：</Colon></Label><Combo $w={200}><Caret $w={7} $small /></Combo><Sep />
            <Label $w={10} /><Label $w={113}>流程状态<Colon>：</Colon>正在运行</Label><Label $w={82}>【正常模式】</Label><Label $w={60}>运行批次<Colon>：</Colon></Label><Batch>20171028145002</Batch>
            <Round><Chev r={0} c="#333" /></Round>
          </FlowTools>
          <Crumbs>
            <Icon n="folderOpen" /><svg width="10" height="8"><path d="M3 0l4.500 4L3 8z" fill="#333" /></svg><MenuItem><T>MainModul</T></MenuItem>
            <CrumbSearch><Label $w={60}>搜索模块<Colon>：</Colon></Label><Combo $w={160}><Caret $w={7} $small /></Combo></CrumbSearch>
          </Crumbs>
          <ViewRow>
            <RulerLeft />
            <ViewCol>
              <RulerTop />
              <Canvas>
                <Wires width="1018" height="443" viewBox={`${OX} ${OY} 1018 443`}>
                  <defs>
                    <linearGradient id="gearFill" x2="0" y2="1"><stop stopColor="#e6f2ee" /><stop offset="1" stopColor="#a3cdbf" /></linearGradient>
                    <linearGradient id="tileFill" x2="0" y2="1"><stop stopColor="#d0d0d0" /><stop offset="1" stopColor="#f1f1f1" /></linearGradient>
                    <linearGradient id="docFill" x2="0" y2="1"><stop stopColor="#f4f9fb" /><stop offset="1" stopColor="#c2dce8" /></linearGradient>
                    <linearGradient id="okFill" x2="0" y2="1"><stop stopColor="#8be57f" /><stop offset=".5" stopColor="#2fbe35" /><stop offset="1" stopColor="#4fe63f" /></linearGradient>
                    <linearGradient id="infoFill" x2="0" y2="1"><stop stopColor="#7ba9dc" /><stop offset="1" stopColor="#1c549f" /></linearGradient>
                  </defs>
                  {COLS.map(c => (
                    <g key={c.x}>
                      <path d={`M${c.x + .5} 156V599M${c.x + 92.5} 156V599`} stroke="#484848" />
                      {ROWS.map(y => <Wire key={y} x={c.x} y={y} />)}
                    </g>
                  ))}
                  {SINGLES.map(s => <Wire key={`${s.x}-${s.y}`} x={s.x} y={s.y} />)}
                  <Wire x={1282} y={333} end />
                  <path d="M445 355.500H454M1190.500 319V392" stroke="#484848" />
                </Wires>
                <Node x={410} y={333} k="begin" label={["MainModul_", "beginjob"]} done on />
                {COLS.map(c => ROWS.map(y => <Node key={`${c.x}-${y}`} x={c.x + 48} y={y} k={c.k} label={c.label} done={c.done} />))}
                {SINGLES.map(s => <Node key={`${s.x}-${s.y}`} x={s.x + 48} y={s.y} k={s.k} label={s.label} />)}
                <Node x={1330} y={333} k="end" label={["MainModul_", "endjob"]} />
                <Info width="24" height="24" viewBox="0 0 24 24"><circle cx="12" cy="12" r="11" fill="url(#infoFill)" stroke="#b9cbe2" strokeWidth=".8" /><circle cx="12" cy="6.500" r="1.900" fill="#fff" /><path d="M9.500 10.500H12.500V17M9 17.300h6.500" fill="none" stroke="#fff" strokeWidth="2.200" /></Info>
                <Overview>
                  <ZoomBar><svg width="106" height="16"><path d="M1 7.500h104" stroke="#777" /><path d="M1 8.500h104" stroke="#fff" /><rect x="15.500" y="1.500" width="7" height="13" rx="1" fill="#eee" stroke="#555" /></svg>100%</ZoomBar>
                  <Mini />
                </Overview>
              </Canvas>
            </ViewCol>
            <VScroll><Chev r={0} /><VThumb /><Chev r={180} /></VScroll>
          </ViewRow>
          <HScroll><Chev r={-90} /><HThumb /><Chev r={90} /></HScroll>
          <Stats>
            <Group $w={374}>
              <Legend>未通过</Legend>
              <Cols $cols="137px 180px"><Stat1 l="未运行" v="71" c="#0b63c5" /><Stat1 l="正执行" v="0" /><Stat1 l="错误再执行" v="0" /><Stat1 l="失败" v="0" /></Cols>
            </Group>
            <Group $w={539}>
              <Legend>已通过</Legend>
              <Cols $cols="133px 176px 175px"><Stat1 l="成功" v="15" c="#0b63c5" /><Stat1 l="强制通过" v="0" /><Stat1 l="无效任务" v="0" /><Stat1 l="警告" v="0" /><Stat1 l="计划周期外" v="0" /></Cols>
            </Group>
            <Total><span>总数<Colon>：</Colon></span><Num $c="#0b63c5">86</Num></Total>
          </Stats>
        </Main>
      </Workspace>
      <Status>就绪</Status>

      <Ime>
        <svg width="16" height="16" viewBox="0 0 16 16" fill="none" stroke="#2b6ff0"><rect x=".7" y=".7" width="14.600" height="14.600" rx="1" strokeWidth="1.300" /><path d="M1 9q0 6 6 6H1z" fill="#2b6ff0" /><circle cx="7.500" cy="8" r="2" fill="#2b6ff0" stroke="none" /><path d="M7.500 8L13 3" strokeWidth="1.300" /></svg>
        <span>中</span>
        <svg width="15" height="15" viewBox="0 0 15 15"><path d="M9.500.5A7.200 7.200 0 11.500 10Q9.500 11 9.500.5z" fill="#2b6ff0" /></svg>
        <svg width="14" height="14" viewBox="0 0 14 14"><circle cx="3.500" cy="4" r="2.200" fill="none" stroke="#2b6ff0" strokeWidth="1.600" /><path d="M10.500 5.500a2.500 2.500 0 012.500 3q-.5 3.500-3.500 4.500l-.5-1q1.500-.8 1.500-1.800a2.400 2.400 0 010-4.700z" fill="#2b6ff0" /></svg>
        <svg width="15" height="14" viewBox="0 0 15 14" fill="#92b4f8"><circle cx="7.500" cy="4" r="3.300" /><path d="M1 13.500q0-5 6.500-5t6.500 5z" /></svg>
        <svg width="15" height="15" viewBox="0 0 15 15"><circle cx="7.500" cy="7.500" r="4" fill="none" stroke="#2b6ff0" strokeWidth="1.800" />{[0, 45, 90, 135, 180, 225, 270, 315].map(a => <path key={a} d="M7.500 .5v3" transform={`rotate(${a} 7.500 7.500)`} stroke="#2b6ff0" strokeWidth="2" />)}</svg>
      </Ime>
      <FloatHead><Logo>CiR</Logo><HeadText>成  功</HeadText><HeadNum>28</HeadNum></FloatHead>
      <Float>{COUNTS.map(([k, v]) => <React.Fragment key={k}><dt>{k}</dt><Green>{v}</Green></React.Fragment>)}</Float>
    </Window>
  );
}
